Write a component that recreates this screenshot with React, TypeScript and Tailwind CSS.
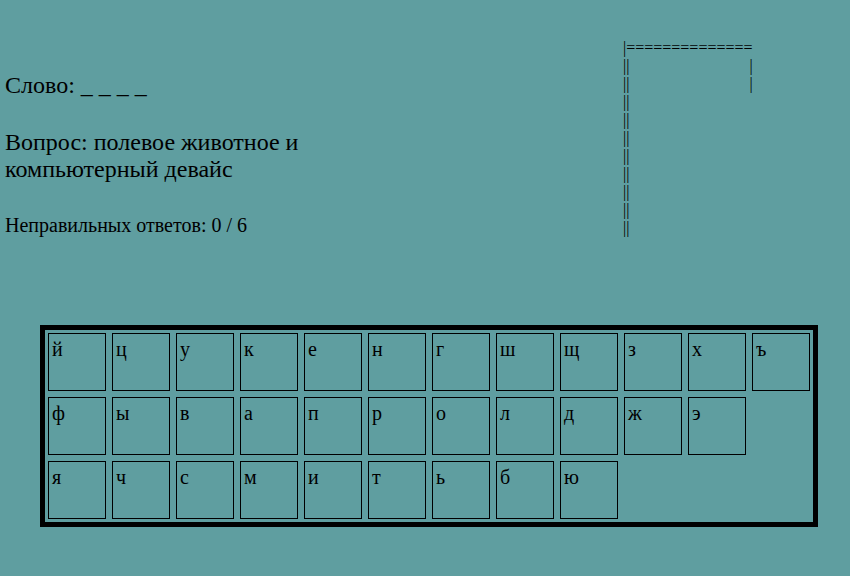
const rows = [
  ['й', 'ц', 'у', 'к', 'е', 'н', 'г', 'ш', 'щ', 'з', 'х', 'ъ'],
  ['ф', 'ы', 'в', 'а', 'п', 'р', 'о', 'л', 'д', 'ж', 'э'],
  ['я', 'ч', 'с', 'м', 'и', 'т', 'ь', 'б', 'ю'],
];

const gallows = [
  '|==============',
  '||                              |',
  '||                              |',
  '||',
  '||',
  '||',
  '||',
  '||',
  '||',
  '||',
  '||',
].join('\n');

export default function App() {
  return (
    <div className="min-h-screen w-full bg-[#5F9EA0] text-black font-['Liberation_Serif','Times_New_Roman',serif]">
      <div className="flex h-[325px]">
        <div className="w-[623px] pl-[5px] pt-[72px]">
          <div className="text-[24px] leading-[normal]">Слово: _ _ _ _</div>
          <div className="mt-[30px] w-[320px] text-[24px] leading-[normal]">
            Вопрос: полевое животное и компьютерный девайс
          </div>
          <div className="mt-[31px] text-[20px] leading-[normal]">Неправильных ответов: 0 / 6</div>
        </div>
        <pre className="pt-[39px] text-[16px] leading-[18px] whitespace-pre font-['Liberation_Serif','Times_New_Roman',serif]">
          {gallows}
        </pre>
      </div>
      <div className="ml-[40px] flex w-[778px] flex-col gap-[6px] border-[5px] border-black p-[3px]">
        {rows.map((row, i) => (
          <div key={i} className="flex gap-[6px]">
            {row.map((letter) => (
              <div
                key={letter}
                className="h-[58px] w-[58px] border border-black pl-[3px] pt-[4px] text-[20px] leading-[normal]"
              >
                {letter}
              </div>
            ))}
          </div>
        ))}
      </div>
    </div>
  );
}
